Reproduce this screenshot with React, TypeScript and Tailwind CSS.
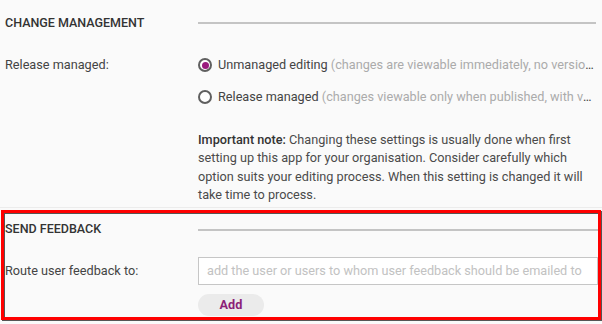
import React from 'react';

const Radio: React.FC<{ checked?: boolean }> = ({ checked }) => (
  <span className="flex h-[14px] w-[14px] shrink-0 items-center justify-center rounded-full border-2 border-[#5f5f5f] bg-white">
    {checked && <span className="h-[7px] w-[7px] rounded-full bg-[#9a1b7e]" />}
  </span>
);

const SectionHeading: React.FC<{ title: string }> = ({ title }) => (
  <div className="grid h-[22px] grid-cols-[193px_1fr] items-center">
    <h2 className="text-[12.5px] font-medium text-[#333]">{title}</h2>
    <div className="h-[2px] bg-[#c4c4c4]" />
  </div>
);

export default function App() {
  return (
    <div className="min-h-screen bg-[#fafafa] font-['Roboto','Liberation_Sans',sans-serif] text-[12.7px] text-[#444]">
      {/* change management */}
      <section className="border-b border-[#ececec] pb-[2px] pl-[5px] pr-[6px] pt-[12px]">
        <SectionHeading title="CHANGE MANAGEMENT" />

        <div className="mt-[21px] grid grid-cols-[193px_1fr]">
          <div className="flex h-[20px] items-center">Release managed:</div>
          <div className="min-w-0">
            <label className="flex h-[20px] items-center gap-[6px]">
              <Radio checked />
              <span className="truncate">
                Unmanaged editing{' '}
                <span className="text-[#ababab]">(changes are viewable immediately, no versioning of content)</span>
              </span>
            </label>
            <label className="mt-[12px] flex h-[20px] items-center gap-[6px]">
              <Radio />
              <span className="truncate">
                Release managed{' '}
                <span className="text-[#ababab]">(changes viewable only when published, with versioning of content)</span>
              </span>
            </label>

            <p className="mt-[24px] max-w-[385px] leading-[18.4px] text-[#4a4a4a]">
              <strong className="font-medium text-[#333]">Important note:</strong> Changing these settings is usually done when first
              setting up this app for your organisation. Consider carefully which option suits your editing process. When this
              setting is changed it will take time to process.
            </p>
          </div>
        </div>
      </section>

      {/* send feedback */}
      <section className="mx-[1px] mt-[2px] border-[3px] border-[#ff0000] pb-[1px] pl-[1px] pt-[6px] shadow-[1px_1px_0_#555,inset_1px_1px_0_#555]">
        <SectionHeading title="SEND FEEDBACK" />

        <div className="mt-[16px] grid grid-cols-[193px_1fr]">
          <div className="flex h-[28px] items-center">Route user feedback to:</div>
          <div>
            <input
              type="text"
              placeholder="add the user or users to whom user feedback should be emailed to"
              className="h-[28px] w-full border border-[#c6c6c6] bg-white px-[8px] text-[12.7px] text-[#444] outline-none placeholder:text-[#c2c2c2]"
            />
            <button
              type="button"
              className="mt-[9px] h-[22px] w-[66px] rounded-full bg-[#ebebeb] text-[12.7px] font-bold text-[#8c1f78]"
            >
              Add
            </button>
          </div>
        </div>
      </section>
    </div>
  );
}
